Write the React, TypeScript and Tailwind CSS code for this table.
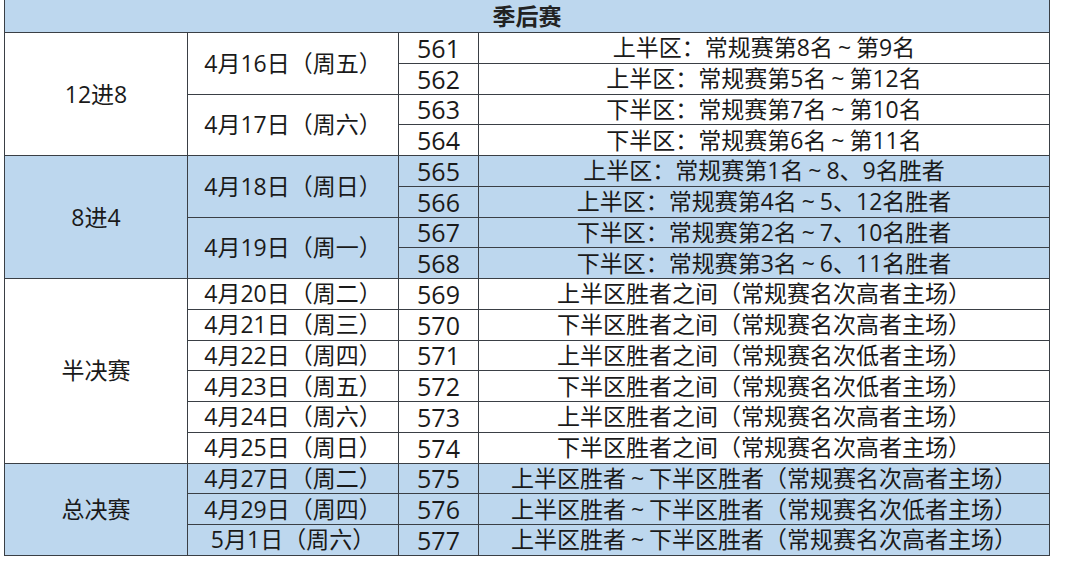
import React from 'react'

type Game = { no: number; desc: string }
type Day = { date: string; games: Game[] }
type Round = { name: string; blue: boolean; days: Day[] }

const rounds: Round[] = [
  {
    name: '12进8',
    blue: false,
    days: [
      { date: '4月16日（周五）', games: [{ no: 561, desc: '上半区：常规赛第8名～第9名' }, { no: 562, desc: '上半区：常规赛第5名～第12名' }] },
      { date: '4月17日（周六）', games: [{ no: 563, desc: '下半区：常规赛第7名～第10名' }, { no: 564, desc: '下半区：常规赛第6名～第11名' }] },
    ],
  },
  {
    name: '8进4',
    blue: true,
    days: [
      { date: '4月18日（周日）', games: [{ no: 565, desc: '上半区：常规赛第1名～8、9名胜者' }, { no: 566, desc: '上半区：常规赛第4名～5、12名胜者' }] },
      { date: '4月19日（周一）', games: [{ no: 567, desc: '下半区：常规赛第2名～7、10名胜者' }, { no: 568, desc: '下半区：常规赛第3名～6、11名胜者' }] },
    ],
  },
  {
    name: '半决赛',
    blue: false,
    days: [
      { date: '4月20日（周二）', games: [{ no: 569, desc: '上半区胜者之间（常规赛名次高者主场）' }] },
      { date: '4月21日（周三）', games: [{ no: 570, desc: '下半区胜者之间（常规赛名次高者主场）' }] },
      { date: '4月22日（周四）', games: [{ no: 571, desc: '上半区胜者之间（常规赛名次低者主场）' }] },
      { date: '4月23日（周五）', games: [{ no: 572, desc: '下半区胜者之间（常规赛名次低者主场）' }] },
      { date: '4月24日（周六）', games: [{ no: 573, desc: '上半区胜者之间（常规赛名次高者主场）' }] },
      { date: '4月25日（周日）', games: [{ no: 574, desc: '下半区胜者之间（常规赛名次高者主场）' }] },
    ],
  },
  {
    name: '总决赛',
    blue: true,
    days: [
      { date: '4月27日（周二）', games: [{ no: 575, desc: '上半区胜者～下半区胜者（常规赛名次高者主场）' }] },
      { date: '4月29日（周四）', games: [{ no: 576, desc: '上半区胜者～下半区胜者（常规赛名次低者主场）' }] },
      { date: '5月1日（周六）', games: [{ no: 577, desc: '上半区胜者～下半区胜者（常规赛名次高者主场）' }] },
    ],
  },
]

const cell = 'border border-[#3a3f45] text-center align-middle p-0 leading-none whitespace-nowrap'

// the wave in the source is a small tilde sitting in a full-width slot
function Desc({ text }: { text: string }) {
  const parts = text.split('～')
  return (
    <>
      {parts.map((p, i) => (
        <React.Fragment key={i}>
          {i > 0 && <span className="inline-block w-[1em] text-center">~</span>}
          {p}
        </React.Fragment>
      ))}
    </>
  )
}

export default function App() {
  return (
    <div className="w-[1080px] h-[586px] bg-white overflow-hidden pl-[4px] font-['Open_Sans','Noto_Sans_CJK_SC',sans-serif] text-[#1a1a1a]">
      <table className="w-[1045px] border-collapse table-fixed -mt-[1px]">
        <colgroup>
          <col className="w-[183px]" />
          <col className="w-[211px]" />
          <col className="w-[80px]" />
          <col className="w-[571px]" />
        </colgroup>
        <tbody>
          <tr className="h-[33px] bg-[#bdd7ee]">
            <td colSpan={4} className={`${cell} text-[23px] font-bold text-[#222]`}>季后赛</td>
          </tr>
          {rounds.map((round) => {
            const total = round.days.reduce((n, d) => n + d.games.length, 0)
            const bg = round.blue ? 'bg-[#bdd7ee]' : 'bg-white'
            return round.days.flatMap((day, di) =>
              day.games.map((g, gi) => (
                <tr key={g.no} className={`h-[30.75px] ${bg}`}>
                  {di === 0 && gi === 0 && (
                    <td rowSpan={total} className={`${cell} text-[23px]`}>{round.name}</td>
                  )}
                  {gi === 0 && (
                    <td rowSpan={day.games.length} className={`${cell} text-[23px]`}>{day.date}</td>
                  )}
                  <td className={`${cell} text-[25px] pt-[1px]`}>{g.no}</td>
                  <td className={`${cell} text-[23px]`}>
                    <Desc text={g.desc} />
                  </td>
                </tr>
              ))
            )
          })}
        </tbody>
      </table>
    </div>
  )
}
